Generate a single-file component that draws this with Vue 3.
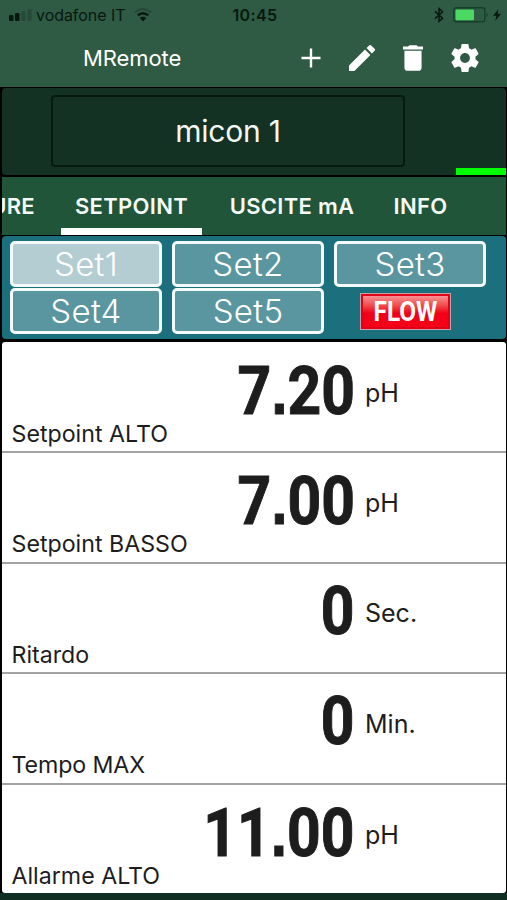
<script setup>
import { ref } from 'vue'

const deviceName = ref('micon 1')
const activeTab = ref('SETPOINT')
const activeSet = ref(1)

const tabs = [
  { label: 'MISURE', key: 'misure' },
  { label: 'SETPOINT', key: 'setpoint' },
  { label: 'USCITE mA', key: 'uscite' },
  { label: 'INFO', key: 'info' },
]

const setpoints = [
  { name: 'Setpoint ALTO', value: '7.20', unit: 'pH', key: 'alto' },
  { name: 'Setpoint BASSO', value: '7.00', unit: 'pH', key: 'basso' },
  { name: 'Ritardo', value: '0', unit: 'Sec.', key: 'ritardo' },
  { name: 'Tempo MAX', value: '0', unit: 'Min.', key: 'tempo' },
  { name: 'Allarme ALTO', value: '11.00', unit: 'pH', key: 'allarme' },
]
</script>

<template>
  <div class="app-shell">
    <header class="top">
      <div class="status-bar">
        <div class="status-left">
          <svg class="signal" width="24" height="12" viewBox="0 0 24 12">
            <rect x="0" y="6" width="4.5" height="6" rx="1" />
            <rect x="6" y="4" width="4.5" height="8" rx="1" />
            <rect x="12.3" y="2" width="4.2" height="10" rx="1" opacity=".25" />
            <rect x="18.5" y="0" width="4.2" height="12" rx="1" opacity=".25" />
          </svg>
          <span class="carrier">vodafone IT</span>
          <svg class="wifi" width="18" height="14" viewBox="0 0 18 14" fill="none">
            <path d="M1 4.5Q9-2.3 17 4.5" stroke="#08180f" stroke-width="2.2" opacity=".25" />
            <path d="M3.8 7.4Q9 3 14.2 7.4" stroke="#08180f" stroke-width="2.5" />
            <path d="M9 13.5L5.8 10Q9 7.5 12.2 10Z" fill="#08180f" />
          </svg>
        </div>
        <span class="clock">10:45</span>
        <div class="status-right">
          <svg width="10" height="16" viewBox="0 0 10 16" fill="none" stroke="#08180f" stroke-width="1.5">
            <path d="M1 4.4L8.6 11.2L5 14.4V1.6L8.6 4.8L1 11.6" />
          </svg>
          <svg class="battery" width="36" height="16" viewBox="0 0 36 16">
            <rect x=".8" y=".8" width="31" height="14" rx="2.5" fill="none" stroke="#143f29" stroke-width="1.4" />
            <rect x="2.5" y="2.5" width="18.5" height="10.7" rx="1" fill="#4bd964" />
            <path d="M33.5 5.5Q36 7.8 33.5 10Z" fill="#143f29" />
          </svg>
          <svg class="bolt" width="8" height="12" viewBox="0 0 8 12">
            <path d="M5.6 0L0 6.8H3.4L2.2 12L8 4.8H4.5Z" fill="#08180f" />
          </svg>
        </div>
      </div>

      <div class="toolbar">
        <h1 class="title">MRemote</h1>
        <nav class="actions">
          <svg width="20" height="20" viewBox="0 0 20 20">
            <path d="M8.8.5h2.4v8.3h8.3v2.4h-8.3v8.3H8.8v-8.3H.5V8.8h8.3z" />
          </svg>
          <svg width="26" height="26" viewBox="3 3 18 18">
            <path d="M3 17.25V21h3.75L17.81 9.94l-3.75-3.75L3 17.25zM20.71 7.04a1 1 0 0 0 0-1.41l-2.34-2.34a1 1 0 0 0-1.41 0l-1.83 1.83 3.75 3.75 1.83-1.83z" />
          </svg>
          <svg width="20" height="26" viewBox="5 3 14 18">
            <path d="M6 19c0 1.1.9 2 2 2h8c1.1 0 2-.9 2-2V7H6v12zM19 4h-3.5l-1-1h-5l-1 1H5v2h14V4z" />
          </svg>
          <svg width="28" height="28" viewBox="2 2 20 20">
            <path d="M19.43 12.98c.04-.32.07-.64.07-.98s-.03-.66-.07-.98l2.11-1.65c.19-.15.24-.42.12-.64l-2-3.46c-.12-.22-.39-.3-.61-.22l-2.49 1c-.52-.4-1.08-.73-1.69-.98l-.38-2.65A.49.49 0 0 0 14 2h-4c-.25 0-.46.18-.49.42l-.38 2.65c-.61.25-1.17.59-1.69.98l-2.49-1c-.23-.09-.49 0-.61.22l-2 3.46c-.13.22-.07.49.12.64l2.11 1.65c-.04.32-.07.65-.07.98s.03.66.07.98l-2.11 1.65c-.19.15-.24.42-.12.64l2 3.46c.12.22.39.3.61.22l2.49-1c.52.4 1.08.73 1.69.98l.38 2.65c.03.24.24.42.49.42h4c.25 0 .46-.18.49-.42l.38-2.65c.61-.25 1.17-.59 1.69-.98l2.49 1c.23.09.49 0 .61-.22l2-3.46c.12-.22.07-.49-.12-.64l-2.11-1.65zM12 15.5c-1.93 0-3.5-1.57-3.5-3.5s1.57-3.5 3.5-3.5 3.5 1.57 3.5 3.5-1.57 3.5-3.5 3.5z" />
          </svg>
        </nav>
      </div>
    </header>

    <main class="content">
      <section class="device">
        <button class="device-name">{{ deviceName }}</button>
        <span class="link-state" />
      </section>

      <nav class="tabs">
        <button
          v-for="tab in tabs"
          :key="tab.key"
          class="tab"
          :class="[tab.key, { active: activeTab === tab.label }]"
          @click="activeTab = tab.label"
        >
          <span class="tab-label">{{ tab.label }}</span>
        </button>
      </nav>

      <section class="sets">
        <button
          v-for="n in 5"
          :key="n"
          class="set-btn"
          :class="{ active: activeSet === n }"
          @click="activeSet = n"
        >
          Set{{ n }}
        </button>
        <div class="flow"><span>FLOW</span></div>
      </section>

      <section class="list">
        <article v-for="item in setpoints" :key="item.key" class="row">
          <div class="reading">
            <span class="value"><span v-for="(char, i) in item.value" :key="i" :class="{ point: char === '.' }">{{ char }}</span></span>
            <span class="unit">{{ item.unit }}</span>
          </div>
          <div class="name" :class="item.key">{{ item.name }}</div>
        </article>
      </section>
    </main>
  </div>
</template>

<style>
body {
  margin: 0;
  background: #102e21;
}
</style>

<style scoped>
.app-shell {
  width: 507px;
  height: 900px;
  display: flex;
  flex-direction: column;
  overflow: hidden;
  background: #102e21;
  font-family: Inter, "Liberation Sans", sans-serif;
}

button {
  margin: 0;
  padding: 0;
  border: none;
  background: none;
  color: inherit;
  font: inherit;
}

.top {
  height: 87px;
  background: #2f5b44;
  color: #fff;
}

.status-bar {
  height: 30px;
  display: grid;
  grid-template-columns: 1fr auto 1fr;
  align-items: center;
  padding: 0 6px 0 9px;
  color: #08180f;
  box-sizing: border-box;
}

.status-left,
.status-right {
  display: flex;
  align-items: center;
}

.status-right {
  justify-content: flex-end;
}

.signal {
  fill: #08180f;
}

.carrier {
  margin-left: 3px;
  font-size: 16px;
  letter-spacing: -0.05px;
}

.wifi {
  margin-left: 9px;
}

.clock {
  font-size: 16px;
  font-weight: 600;
  letter-spacing: 0.4px;
}

.battery {
  margin-left: 9px;
}

.bolt {
  margin-left: 4px;
}

.toolbar {
  height: 57px;
  display: flex;
  align-items: center;
  justify-content: space-between;
  padding: 0 28px 2px 83px;
  box-sizing: border-box;
}

.title {
  margin: 0;
  font-size: 22px;
  font-weight: 400;
  letter-spacing: -0.1px;
}

.actions {
  display: flex;
  align-items: center;
  gap: 28px;
  fill: #fff;
}

.content {
  height: 806px;
  display: flex;
  flex-direction: column;
  background: #000;
  padding: 1px 1px 0 2px;
  box-sizing: border-box;
}

.device {
  flex: none;
  height: 87px;
  display: flex;
  padding: 7px 0 0 49px;
  box-sizing: border-box;
  background: #143223;
  border-radius: 4px;
  position: relative;
}

.device-name {
  width: 354px;
  height: 72px;
  border: 2px solid #061b10;
  border-radius: 4px;
  color: #f2f7f4;
  font-size: 30px;
  letter-spacing: -0.2px;
}

.link-state {
  position: absolute;
  right: 0;
  bottom: 0;
  width: 50px;
  height: 7px;
  background: #00ff00;
}

.tabs {
  flex: none;
  height: 58px;
  margin-top: 2px;
  display: flex;
  overflow: hidden;
  background: #205539;
  color: #f6faf7;
  font-size: 22px;
  font-weight: 600;
}

.tab {
  flex: none;
  display: flex;
  align-items: center;
  justify-content: center;
  box-sizing: border-box;
  border-bottom: 7px solid transparent;
  padding-top: 7px;
  letter-spacing: 0.3px;
}

.tab.active {
  border-bottom-color: #fff;
}

.tab.misure {
  width: 59px;
  justify-content: flex-end;
  padding-right: 26px;
  box-sizing: border-box;
}

.tab.setpoint {
  width: 141px;
}

.tab.uscite {
  width: 180px;
}

.tab.info {
  width: 77px;
}

.sets {
  flex: none;
  height: 103px;
  margin-top: 1px;
  display: grid;
  grid-template-columns: repeat(3, 152px);
  grid-template-rows: repeat(2, 46px);
  column-gap: 10px;
  row-gap: 1px;
  padding: 5px 0 0 8px;
  box-sizing: border-box;
  background: #1c6f7c;
  border-radius: 4px;
}

.set-btn {
  box-sizing: border-box;
  border: 3px solid #f4fbfc;
  border-radius: 5px;
  background: #5996a0;
  color: #fff;
  font-size: 33px;
  font-weight: 300;
  padding-top: 1px;
  line-height: 39px;
  letter-spacing: 0.3px;
}

.set-btn.active {
  background: #b3cdd2;
}

.flow {
  align-self: center;
  justify-self: center;
  width: 91px;
  height: 37px;
  margin-left: -10px;
  padding-top: 2px;
  box-sizing: border-box;
  display: flex;
  align-items: center;
  justify-content: center;
  border: 1px solid #c2a3a8;
  background: linear-gradient(#f9a0a0, #f04545 35%, #f00018 55%, #fa0018);
  box-shadow: inset 0 0 0 2px #e00018;
  color: #fff;
  font-family: Roboto, sans-serif;
  font-size: 27px;
  font-weight: 700;
}

.flow span {
  transform: scaleX(0.9);
}

.list {
  margin-top: 2.5px;
  padding-top: 1px;
  flex: 1;
  min-height: 0;
  overflow: hidden;
  display: flex;
  flex-direction: column;
  background: #fff;
  border-radius: 3px;
  color: #1d1d1d;
}

.row {
  flex: none;
  height: 110.5px;
  display: flex;
  flex-direction: column;
  box-sizing: border-box;
  border-bottom: 2px solid #a3a3a3;
}

.row:last-child {
  border-bottom: none;
}

.reading {
  height: 78px;
  display: grid;
  grid-template-columns: 352.5px 1fr;
  column-gap: 10.5px;
  align-items: center;
  padding-top: 17px;
  box-sizing: border-box;
}

.value {
  justify-self: end;
  font-family: Roboto, sans-serif;
  font-size: 67px;
  font-weight: 700;
  line-height: 61px;
  transform: scaleX(0.877);
  transform-origin: right;
  -webkit-text-stroke: 1px #1d1d1d;
}

.point {
  font-family: "Liberation Sans", sans-serif;
}

.unit {
  padding-top: 4px;
  font-size: 25px;
}

.name {
  padding-left: 9.5px;
  font-size: 23.2px;
  line-height: 26px;
}

.name.tempo {
  letter-spacing: -0.1px;
}
</style>
